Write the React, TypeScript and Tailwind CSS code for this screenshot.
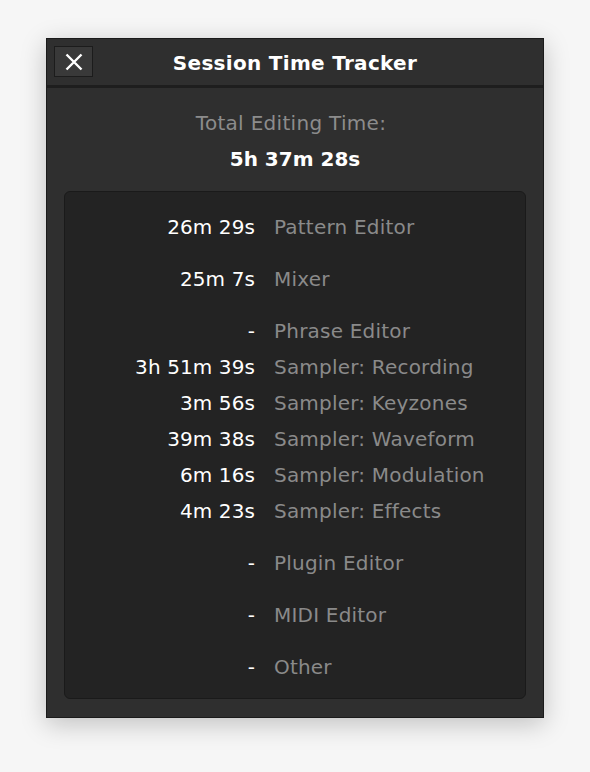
import React from "react";

const rows: { t: string; l: string; gap?: boolean }[] = [
  { t: "26m 29s", l: "Pattern Editor" },
  { t: "25m 7s", l: "Mixer", gap: true },
  { t: "-", l: "Phrase Editor", gap: true },
  { t: "3h 51m 39s", l: "Sampler: Recording" },
  { t: "3m 56s", l: "Sampler: Keyzones" },
  { t: "39m 38s", l: "Sampler: Waveform" },
  { t: "6m 16s", l: "Sampler: Modulation" },
  { t: "4m 23s", l: "Sampler: Effects" },
  { t: "-", l: "Plugin Editor", gap: true },
  { t: "-", l: "MIDI Editor", gap: true },
  { t: "-", l: "Other", gap: true },
];

export default function App() {
  return (
    <div
      className="w-[590px] h-[772px] bg-[#f6f6f6] pt-[38px] pl-[46px] overflow-hidden"
      style={{ fontFamily: '"DejaVu Sans", Verdana, sans-serif' }}
    >
      <div className="w-[498px] h-[680px] border border-[#1b1b1b] bg-[#2f2f2f] flex flex-col shadow-[0_6px_24px_rgba(0,0,0,0.22)]">
        <div className="h-[46px] relative flex items-center justify-center shrink-0">
          <button className="absolute left-[7px] top-[7px] w-[39px] h-[31px] bg-[#393939] border border-[#1c1c1c] flex items-center justify-center">
            <svg width="18" height="18" viewBox="0 0 18 18">
              <path d="M1.5 1.5 L16.5 16.5 M16.5 1.5 L1.5 16.5" stroke="#ffffff" strokeWidth="2.4" strokeLinecap="butt" />
            </svg>
          </button>
          <span className="text-white font-bold text-[20px] leading-6 pt-px tracking-[0.3px]">Session Time Tracker</span>
        </div>
        <div className="h-[3px] bg-[#1e1e1e] shrink-0" />
        <div className="flex flex-col items-center pt-[23px]">
          <div className="text-[20px] leading-6 text-[#8c8c8c] tracking-[0.3px] mr-[8px]">Total Editing Time:</div>
          <div className="text-[20px] leading-6 text-white font-bold mt-3">5h 37m 28s</div>
        </div>
        <div className="mx-[17px] mt-[20px] mb-[18px] flex-1 bg-[#232323] border border-[#1a1a1a] rounded-md pt-[17px]">
          {rows.map((r, i) => (
            <div key={i} className={`flex h-9 items-center text-[20px] ${r.gap ? "mt-4" : ""}`}>
              <div className="w-[190px] text-right text-white tracking-[0.1px]">{r.t}</div>
              <div className="ml-[19px] text-[#8a8a8a] tracking-[0.2px]">{r.l}</div>
            </div>
          ))}
        </div>
      </div>
    </div>
  );
}
